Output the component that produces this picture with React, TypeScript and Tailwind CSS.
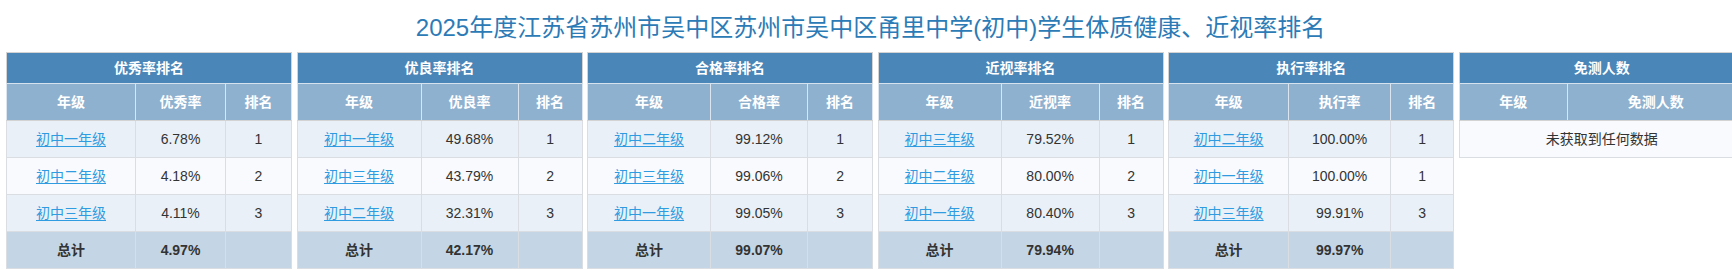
type Row = { grade: string; value: string; rank: string };

type RankTable = {
  title: string;
  label: string;
  cols: [string, string, string];
  rows: Row[];
  total: string;
};

const tables: RankTable[] = [
  {
    title: "优秀率排名",
    label: "优秀率",
    cols: ["w-[129px]", "w-[90px]", "w-[66px]"],
    rows: [
      { grade: "初中一年级", value: "6.78%", rank: "1" },
      { grade: "初中二年级", value: "4.18%", rank: "2" },
      { grade: "初中三年级", value: "4.11%", rank: "3" },
    ],
    total: "4.97%",
  },
  {
    title: "优良率排名",
    label: "优良率",
    cols: ["w-[124px]", "w-[97px]", "w-[64px]"],
    rows: [
      { grade: "初中一年级", value: "49.68%", rank: "1" },
      { grade: "初中三年级", value: "43.79%", rank: "2" },
      { grade: "初中二年级", value: "32.31%", rank: "3" },
    ],
    total: "42.17%",
  },
  {
    title: "合格率排名",
    label: "合格率",
    cols: ["w-[123px]", "w-[97px]", "w-[65px]"],
    rows: [
      { grade: "初中二年级", value: "99.12%", rank: "1" },
      { grade: "初中三年级", value: "99.06%", rank: "2" },
      { grade: "初中一年级", value: "99.05%", rank: "3" },
    ],
    total: "99.07%",
  },
  {
    title: "近视率排名",
    label: "近视率",
    cols: ["w-[123px]", "w-[98px]", "w-[64px]"],
    rows: [
      { grade: "初中三年级", value: "79.52%", rank: "1" },
      { grade: "初中二年级", value: "80.00%", rank: "2" },
      { grade: "初中一年级", value: "80.40%", rank: "3" },
    ],
    total: "79.94%",
  },
  {
    title: "执行率排名",
    label: "执行率",
    cols: ["w-[120px]", "w-[102px]", "w-[63px]"],
    rows: [
      { grade: "初中二年级", value: "100.00%", rank: "1" },
      { grade: "初中一年级", value: "100.00%", rank: "1" },
      { grade: "初中三年级", value: "99.91%", rank: "3" },
    ],
    total: "99.97%",
  },
];

const head1 = "h-[31px] bg-[#4a86b7] text-white font-bold border border-[#d3d3d3] border-b-[#d6e2ee]";
const head2 = "h-[37px] bg-[#8eb1cf] text-white font-bold border border-[#d3d3d3] border-x-[#dbe5ef]";
const cell = "h-[37px] border border-[#dadde1] text-center";

function Ranking({ t }: { t: RankTable }) {
  return (
    <table className="w-[285px] shrink-0 table-fixed border-collapse text-[14px] text-[#333]">
      <colgroup>
        <col className={t.cols[0]} />
        <col className={t.cols[1]} />
        <col className={t.cols[2]} />
      </colgroup>
      <thead>
        <tr>
          <th colSpan={3} className={head1}>{t.title}</th>
        </tr>
        <tr>
          <th className={head2}>年级</th>
          <th className={head2}>{t.label}</th>
          <th className={head2}>排名</th>
        </tr>
      </thead>
      <tbody>
        {t.rows.map((r, i) => (
          <tr key={i} className={i % 2 === 0 ? "bg-[#e9f0f7]" : "bg-[#f8fafd]"}>
            <td className={cell}>
              <a href="#" className="text-[#2f9be0] underline underline-offset-2">{r.grade}</a>
            </td>
            <td className={cell}>{r.value}</td>
            <td className={cell}>{r.rank}</td>
          </tr>
        ))}
        <tr className="bg-[#c4d6e5] font-bold">
          <td className={cell}>总计</td>
          <td className={cell}>{t.total}</td>
          <td className={cell}></td>
        </tr>
      </tbody>
    </table>
  );
}

export default function App() {
  return (
    <div className="w-full h-[270px] overflow-hidden bg-white font-['Liberation_Sans','Noto_Sans_CJK_SC',sans-serif]">
      <div className="h-[52px] pt-[4px] pl-[9px] flex items-center justify-center text-[24px] text-[#2c7bb6]">
        2025年度江苏省苏州市吴中区苏州市吴中区甬里中学(初中)学生体质健康、近视率排名
      </div>
      <div className="flex items-start gap-[4.5px] pl-[6px]">
        {tables.map((t) => (
          <Ranking key={t.title} t={t} />
        ))}
        <table className="w-[285px] shrink-0 table-fixed border-collapse text-[14px] text-[#333]">
          <colgroup>
            <col className="w-[108px]" />
            <col className="w-[177px]" />
          </colgroup>
          <thead>
            <tr>
              <th colSpan={2} className={head1}>免测人数</th>
            </tr>
            <tr>
              <th className={head2}>年级</th>
              <th className={head2}>免测人数</th>
            </tr>
          </thead>
          <tbody>
            <tr className="bg-[#f8fafd]">
              <td colSpan={2} className={cell}>未获取到任何数据</td>
            </tr>
          </tbody>
        </table>
      </div>
    </div>
  );
}
